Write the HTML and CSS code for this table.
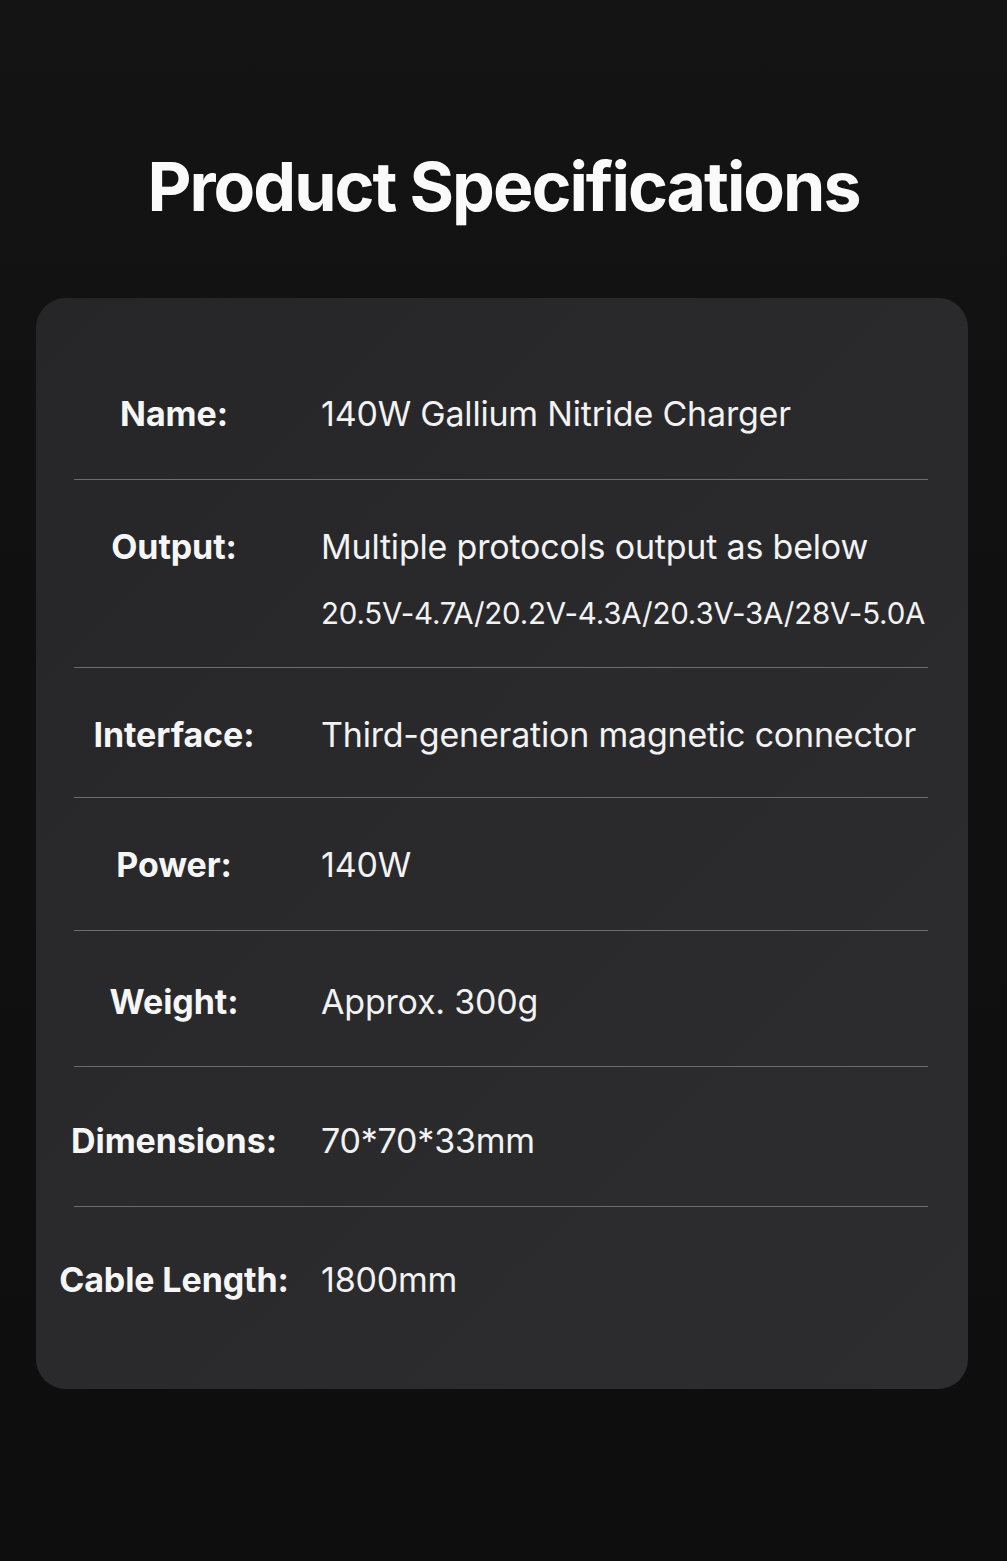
FILE: index.html
```html
<!DOCTYPE html>
<html lang="en">
<head>
<meta charset="utf-8">
<title>Product Specifications</title>
<link rel="stylesheet" href="styles.css">
</head>
<body>
<main class="page">
  <h1 class="title">Product Specifications</h1>
  <section class="card">
    <div class="row row-first">
      <div class="label">Name:</div>
      <div class="value">140W Gallium Nitride Charger</div>
    </div>
    <div class="divider"></div>
    <div class="row row-output">
      <div class="label">Output:</div>
      <div class="value">Multiple protocols output as below<span class="sub">20.5V-4.7A/20.2V-4.3A/20.3V-3A/28V-5.0A</span></div>
    </div>
    <div class="divider"></div>
    <div class="row row-interface">
      <div class="label">Interface:</div>
      <div class="value">Third-generation magnetic connector</div>
    </div>
    <div class="divider"></div>
    <div class="row">
      <div class="label">Power:</div>
      <div class="value">140W</div>
    </div>
    <div class="divider"></div>
    <div class="row row-weight">
      <div class="label">Weight:</div>
      <div class="value">Approx. 300g</div>
    </div>
    <div class="divider"></div>
    <div class="row row-dim">
      <div class="label">Dimensions:</div>
      <div class="value">70*70*33mm</div>
    </div>
    <div class="divider"></div>
    <div class="row row-last">
      <div class="label">Cable Length:</div>
      <div class="value">1800mm</div>
    </div>
  </section>
</main>
</body>
</html>
```

FILE: styles.css
```css
* { box-sizing: border-box; }
html, body { margin: 0; padding: 0; }
body {
  background: linear-gradient(180deg, #141415 0%, #101011 40%, #0e0e0f 100%);
  color: #f4f4f4;
  font-family: Inter, "Noto Sans", sans-serif;
  min-height: 1561px;
}
.page {
  padding: 138px 36px 172px 36px;
}
.title {
  margin: 0;
  text-align: center;
  font-size: 68px;
  font-weight: 700;
  line-height: 96px;
  letter-spacing: -2px;
  color: #fafafa;
}
.card {
  margin-top: 64px;
  background: linear-gradient(135deg, #262628 0%, #2a2a2c 50%, #2d2d2f 100%);
  border-radius: 30px;
  width: 932px;
}
.row {
  display: grid;
  grid-template-columns: 276px 1fr;
  align-items: start;
  padding: 47px 0 45px 0;
}
.row-first { padding-top: 96px; }
.row-output { padding-top: 47px; padding-bottom: 38px; }
.row-interface { padding-bottom: 42px; }
.row-weight { padding-top: 51px; padding-bottom: 44px; }
.row-dim { padding-top: 54px; padding-bottom: 45px; }
.row-last { padding-top: 53px; padding-bottom: 89px; }
.label {
  text-align: center;
  font-size: 34px;
  font-weight: 700;
  line-height: 40px;
  white-space: nowrap;
  letter-spacing: -0.1px;
  color: #f6f6f6;
}
.value {
  padding-left: 9px;
  font-size: 34px;
  font-weight: 400;
  line-height: 40px;
  white-space: nowrap;
  color: #f2f2f2;
  letter-spacing: -0.2px;
}
.sub {
  display: block;
  margin-top: 30px;
  font-size: 29.5px;
  line-height: 32px;
  letter-spacing: -0.2px;
}
.divider {
  height: 1px;
  margin: 0 40px 0 38px;
  background: #6c6c6e;
}
```
